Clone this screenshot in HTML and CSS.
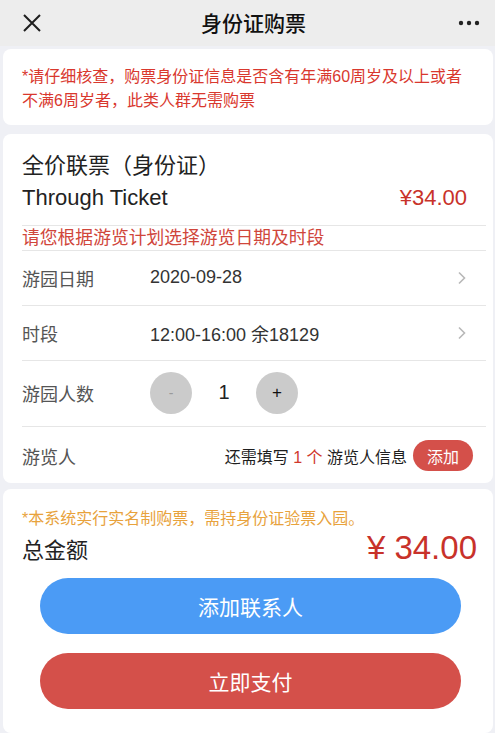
FILE: index.html
```html
<!DOCTYPE html>
<html lang="zh-CN">
<head>
<meta charset="utf-8">
<title>身份证购票</title>
<link rel="stylesheet" href="styles.css">
</head>
<body>
<header class="topbar">
  <svg class="close" width="18" height="18" viewBox="0 0 18 18"><path d="M1 1L17 17M17 1L1 17" stroke="#1e1e1e" stroke-width="2" fill="none"/></svg>
  <h1 class="title">身份证购票</h1>
  <svg class="more" width="22" height="6" viewBox="0 0 22 6"><circle cx="3" cy="3" r="2.2" fill="#222"/><circle cx="11" cy="3" r="2.2" fill="#222"/><circle cx="19" cy="3" r="2.2" fill="#222"/></svg>
</header>
<main class="page">
  <section class="card notice-card">
    <p class="notice">*请仔细核查，购票身份证信息是否含有年满60周岁及以上或者不满6周岁者，此类人群无需购票</p>
  </section>

  <section class="card ticket-card">
    <div class="ticket-head">
      <div class="ticket-name">全价联票（身份证）</div>
      <div class="ticket-line">
        <span class="ticket-en">Through Ticket</span>
        <span class="ticket-price">¥34.00</span>
      </div>
    </div>
    <div class="plan-tip">请您根据游览计划选择游览日期及时段</div>
    <div class="row">
      <span class="label">游园日期</span>
      <span class="value">2020-09-28</span>
      <svg class="chev" width="10" height="14" viewBox="0 0 10 14"><path d="M2 1.5L7.5 7L2 12.5" stroke="#b8b8b8" stroke-width="1.6" fill="none"/></svg>
    </div>
    <div class="row">
      <span class="label">时段</span>
      <span class="value">12:00-16:00 余18129</span>
      <svg class="chev" width="10" height="14" viewBox="0 0 10 14"><path d="M2 1.5L7.5 7L2 12.5" stroke="#b8b8b8" stroke-width="1.6" fill="none"/></svg>
    </div>
    <div class="row row-count">
      <span class="label">游园人数</span>
      <div class="stepper">
        <span class="step step-minus">-</span>
        <span class="count">1</span>
        <span class="step step-plus">+</span>
      </div>
    </div>
    <div class="row row-visitor">
      <span class="label">游览人</span>
      <span class="need">还需填写 <em class="need-num">1 个</em> 游览人信息</span>
      <span class="add-btn">添加</span>
    </div>
  </section>

  <section class="card pay-card">
    <p class="realname">*本系统实行实名制购票，需持身份证验票入园。</p>
    <div class="total">
      <span class="total-label">总金额</span>
      <span class="total-price">¥ 34.00</span>
    </div>
    <button class="btn btn-blue">添加联系人</button>
    <button class="btn btn-red">立即支付</button>
  </section>
</main>
</body>
</html>
```
FILE: styles.css
```css
* { box-sizing: border-box; }
html, body { margin: 0; padding: 0; }
body {
  width: 495px;
  height: 733px;
  overflow: hidden;
  background: #eff0f5;
  font-family: "Liberation Sans", "Noto Sans CJK SC", sans-serif;
  color: #222;
}
.topbar {
  height: 46px;
  background: #ededed;
  display: flex;
  align-items: center;
  justify-content: space-between;
  padding: 0 15px 0 23px;
}
.close { display: block; }
.title {
  margin: 0;
  font-size: 21px;
  font-weight: 500;
  color: #111;
  padding-left: 8px;
  position: relative;
  top: -1px;
}
.more { display: block; }
.page {
  padding: 3px 2px 0 3px;
}
.card {
  background: #fff;
  border-radius: 8px;
}
.notice-card {
  padding: 16px 26px 12px 19px;
}
.notice {
  margin: 0;
  font-size: 16px;
  line-height: 24px;
  color: #d9382e;
}
.ticket-card {
  margin-top: 9px;
  padding: 16px 7px 0 19px;
}
.ticket-head {
  padding-bottom: 11px;
  border-bottom: 1px solid #e6e6e6;
}
.ticket-name {
  font-size: 22px;
  line-height: 32px;
  color: #222;
}
.ticket-line {
  display: flex;
  justify-content: space-between;
  align-items: center;
  height: 32px;
  padding-right: 19px;
}
.ticket-en { font-size: 22px; color: #222; }
.ticket-price { font-size: 22px; color: #c8322a; }
.plan-tip {
  font-size: 17.8px;
  line-height: 24px;
  color: #d0463b;
  border-bottom: 1px solid #e6e6e6;
}
.row {
  display: flex;
  align-items: center;
  height: 55px;
  border-bottom: 1px solid #e6e6e6;
  padding-right: 19px;
  padding-bottom: 1px;
}
.label {
  width: 128px;
  flex: none;
  font-size: 18px;
  color: #555;
}
.value {
  flex: 1;
  font-size: 18px;
  color: #333;
}
.chev { display: block; }
.row-count { height: 66px; padding-bottom: 2px; }
.stepper { display: flex; align-items: center; }
.step {
  width: 42px;
  height: 42px;
  border-radius: 50%;
  background: #cbcbcb;
  display: flex;
  align-items: center;
  justify-content: center;
}
.step-minus { color: #9a9a9a; font-size: 14px; }
.step-plus { color: #111; font-size: 17px; }
.count {
  width: 64px;
  text-align: center;
  font-size: 20px;
  color: #222;
}
.row-visitor {
  border-bottom: none;
  height: 56px;
  padding-top: 1px;
  padding-bottom: 0;
  padding-right: 13px;
}
.need {
  flex: 1;
  text-align: right;
  font-size: 16px;
  color: #1e1e1e;
  padding-right: 6px;
}
.need-num { font-style: normal; color: #d0382c; }
.add-btn {
  width: 60px;
  height: 31px;
  border-radius: 16px;
  background: #d4504a;
  color: #fff;
  font-size: 16px;
  display: flex;
  align-items: center;
  justify-content: center;
}
.pay-card {
  margin-top: 6px;
  padding: 19px 16px 24px 19px;
  display: flex;
  flex-direction: column;
}
.realname {
  margin: 0;
  font-size: 16px;
  line-height: 22px;
  color: #e8a23c;
}
.total {
  display: flex;
  justify-content: space-between;
  align-items: center;
  height: 40px;
  padding-bottom: 5px;
}
.total-label { font-size: 22px; color: #222; }
.total-price { font-size: 33px; color: #c8322a; }
.btn {
  display: block;
  height: 56px;
  border: none;
  border-radius: 28px;
  color: #fff;
  font-family: inherit;
  font-size: 21px;
  margin: 0 16px 0 18px;
  padding: 0;
}
.btn-blue { background: #4b9bf5; margin-top: 8px; }
.btn-red { background: #d4504a; margin-top: 19px; }
```
